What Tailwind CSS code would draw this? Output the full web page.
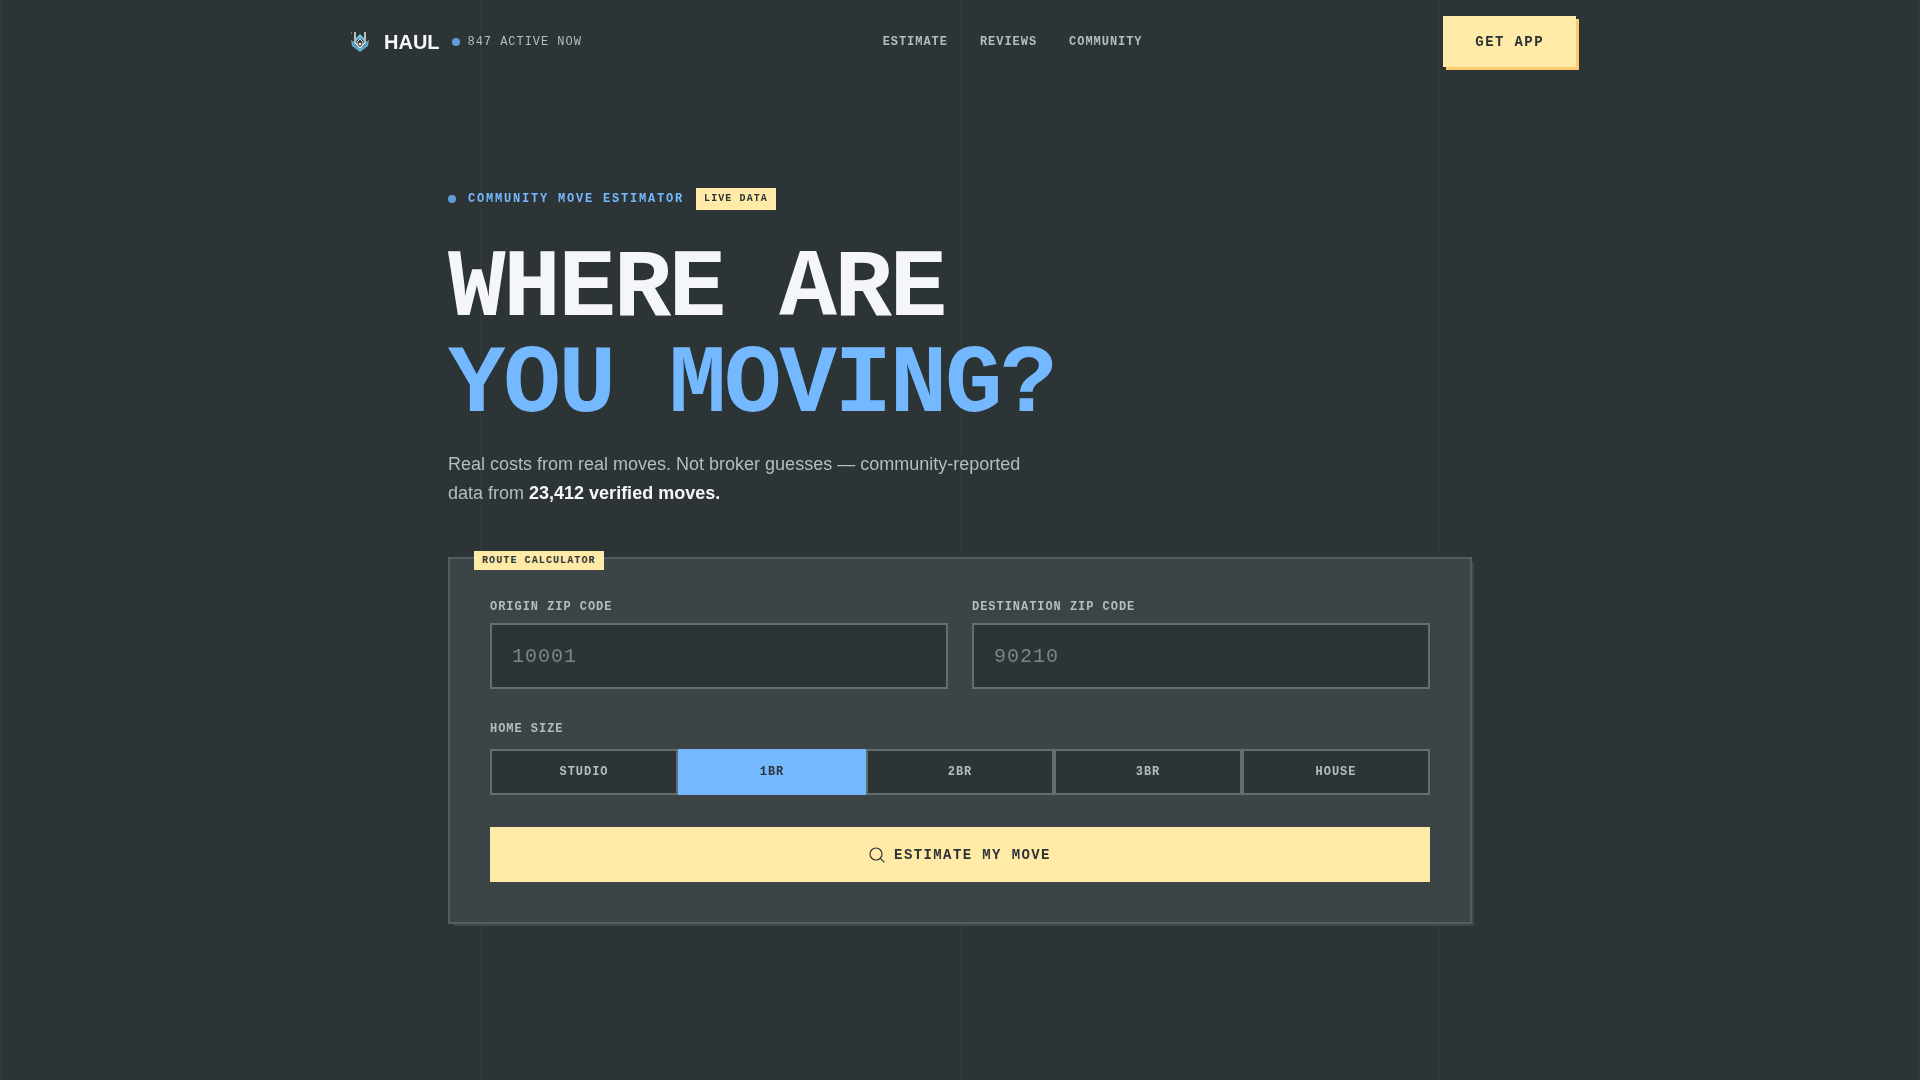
<!DOCTYPE html>
<html lang="en">

<head>
    <meta charset="UTF-8">
    <meta name="viewport" content="width=device-width, initial-scale=1.0">
    <title>HAUL - Community Move Estimator</title>
    <script src="https://cdn.jsdelivr.net/npm/@tailwindcss/browser@4"></script>
</head>

<body class="bg-[#2d3436] text-[#f5f6fa] font-['Liberation_Sans',Arial,sans-serif] antialiased">
    <!-- Background grid lines -->
    <div class="fixed inset-0 flex justify-between pointer-events-none" aria-hidden="true">
        <div class="w-px bg-[#636e72]/10"></div>
        <div class="w-px bg-[#636e72]/10"></div>
        <div class="w-px bg-[#636e72]/10"></div>
        <div class="w-px bg-[#636e72]/10"></div>
        <div class="w-px bg-[#636e72]/10"></div>
    </div>

    <div class="relative min-h-screen flex flex-col">
        <header class="w-full max-w-7xl mx-auto px-6 py-4 flex items-center justify-between">
            <div class="flex items-center gap-3">
                <a href="#" class="flex items-center gap-2">
                    <svg class="size-8" viewBox="0 0 32 32" fill="none" aria-hidden="true">
                        <path d="M7 14l3 2 1 3 5 4 5-4 1-3 3-2-1 6-8 6-8-6z" fill="#5ba9cf" />
                        <path d="M12 12l4-4 4 4v3l-4-3-4 3z" fill="#6fc3e3" />
                        <path d="M11 6v11l5 5 5-5V6" stroke="#f5f6fa" stroke-width="1.4" />
                        <path d="M13 19v-3l3-3 3 3v3" stroke="#f5f6fa" stroke-width="1" />
                        <circle cx="16" cy="18" r="1.3" fill="#f5f6fa" />
                        <path d="M7 7h1" stroke="#b2bec3" stroke-width="1" />
                    </svg>
                    <span class="text-xl font-bold">HAUL</span>
                </a>
                <div class="flex items-center gap-2">
                    <span class="size-2 rounded-full bg-[#619bd8]"></span>
                    <span class="font-['Liberation_Mono',monospace] text-xs tracking-[0.08em] text-[#b2bec3]">847 ACTIVE NOW</span>
                </div>
            </div>

            <nav class="flex items-center gap-8 font-['Liberation_Mono',monospace] text-xs font-bold tracking-[0.08em] text-[#b2bec3]">
                <a href="#estimate" class="hover:text-[#74b9ff]">ESTIMATE</a>
                <a href="#reviews" class="hover:text-[#74b9ff]">REVIEWS</a>
                <a href="#community" class="hover:text-[#74b9ff]">COMMUNITY</a>
            </nav>

            <button type="button" class="h-[51px] px-8 bg-[#ffeaa7] text-[#2d3436] font-['Liberation_Mono',monospace] text-sm font-bold tracking-widest shadow-[3px_3px_0_#fdcb6e] cursor-pointer">GET APP</button>
        </header>

        <main class="w-full max-w-5xl mx-auto pt-[105px] pb-24">
            <div class="flex items-center gap-3 font-['Liberation_Mono',monospace] font-bold">
                <span class="size-2 rounded-full bg-[#619bd8]"></span>
                <span class="text-xs tracking-[0.15em] text-[#74b9ff]">COMMUNITY MOVE ESTIMATOR</span>
                <span class="px-2 py-1 bg-[#ffeaa7] text-[#2d3436] text-[10px] leading-[14px] tracking-[0.11em]">LIVE DATA</span>
            </div>

            <h1 class="mt-8 font-['Liberation_Mono',monospace] text-8xl leading-none font-bold tracking-tight">
                WHERE ARE<br>
                <span class="text-[#74b9ff]">YOU MOVING?</span>
            </h1>

            <p class="mt-4 max-w-xl text-lg leading-[29px] text-[#b2bec3]">
                Real costs from real moves. Not broker guesses — community-reported data from
                <strong class="font-bold text-[#f5f6fa]">23,412 verified moves.</strong>
            </p>

            <!-- Route calculator -->
            <form id="estimate" class="relative mt-[49px] p-10 bg-[#3d4446] border-2 border-[#535c5f] shadow-[4px_4px_0_-2px_#3f4749] font-['Liberation_Mono',monospace]">
                <span class="absolute -top-2 left-6 px-2 py-1 bg-[#ffeaa7] text-[#2d3436] text-[10px] leading-[11px] font-bold tracking-[0.11em]">ROUTE CALCULATOR</span>

                <div class="grid grid-cols-2 gap-6">
                    <div>
                        <label for="origin" class="block mb-2 text-xs leading-4 font-bold tracking-[0.08em] text-[#b2bec3]">ORIGIN ZIP CODE</label>
                        <input id="origin" type="text" inputmode="numeric" maxlength="5" placeholder="10001" class="block w-full h-[66px] px-5 bg-[#2d3436] border-2 border-[#636e72] text-xl tracking-wider placeholder:text-[#7b8588] outline-none focus:border-[#74b9ff]">
                    </div>
                    <div>
                        <label for="destination" class="block mb-2 text-xs leading-4 font-bold tracking-[0.08em] text-[#b2bec3]">DESTINATION ZIP CODE</label>
                        <input id="destination" type="text" inputmode="numeric" maxlength="5" placeholder="90210" class="block w-full h-[66px] px-5 bg-[#2d3436] border-2 border-[#636e72] text-xl tracking-wider placeholder:text-[#7b8588] outline-none focus:border-[#74b9ff]">
                    </div>
                </div>

                <div class="mt-8" role="group" aria-labelledby="size-label">
                    <div id="size-label" class="mb-3 text-xs leading-4 font-bold tracking-[0.08em] text-[#b2bec3]">HOME SIZE</div>
                    <div class="grid grid-cols-5 text-xs font-bold tracking-[0.08em]">
                        <button type="button" class="h-[46px] border-2 border-[#636e72] bg-[#2d3436] text-[#b2bec3] cursor-pointer">STUDIO</button>
                        <button type="button" aria-pressed="true" class="h-[46px] border-2 border-[#74b9ff] bg-[#74b9ff] text-[#2d3436] cursor-pointer">1BR</button>
                        <button type="button" class="h-[46px] border-2 border-[#636e72] bg-[#2d3436] text-[#b2bec3] cursor-pointer">2BR</button>
                        <button type="button" class="h-[46px] border-2 border-[#636e72] bg-[#2d3436] text-[#b2bec3] cursor-pointer">3BR</button>
                        <button type="button" class="h-[46px] border-2 border-[#636e72] bg-[#2d3436] text-[#b2bec3] cursor-pointer">HOUSE</button>
                    </div>
                </div>

                <button type="submit" class="mt-8 w-full h-[55px] flex items-center justify-center gap-[9px] bg-[#ffeaa7] text-[#2d3436] text-sm font-bold tracking-widest cursor-pointer">
                    <svg class="size-4" viewBox="0 0 16 16" fill="none" stroke="currentColor" stroke-width="1.2" aria-hidden="true">
                        <circle cx="7" cy="7" r="6" />
                        <path d="M11.3 11.3l4 4" />
                    </svg>
                    ESTIMATE MY MOVE
                </button>
            </form>
        </main>
    </div>
</body>

</html>
